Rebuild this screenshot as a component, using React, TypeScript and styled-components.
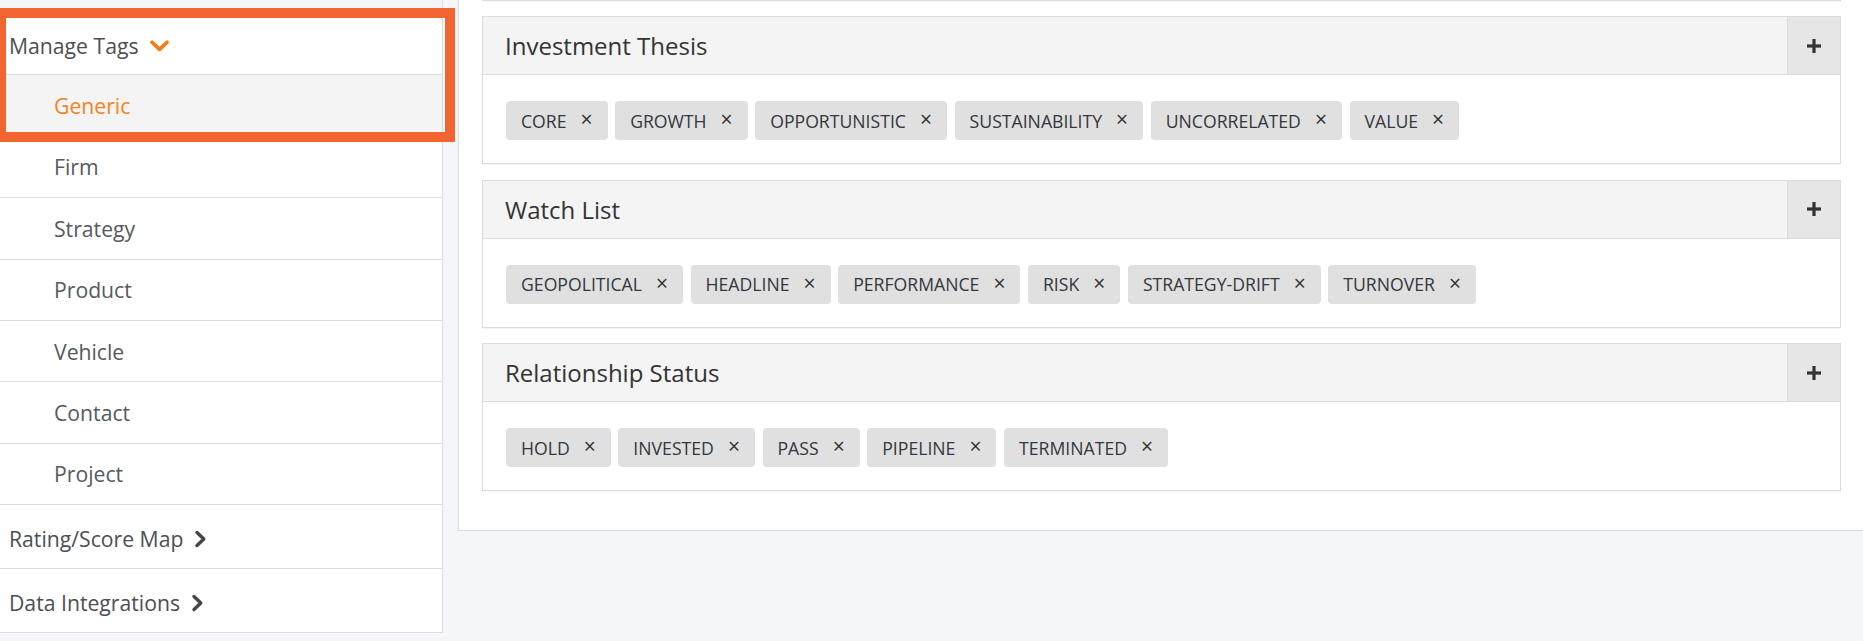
import React from 'react';
import styled, { createGlobalStyle } from 'styled-components';

const GlobalStyle = createGlobalStyle`
  html, body {
    margin: 0;
    padding: 0;
    background: #f5f6fa;
    font-family: 'Open Sans', 'Noto Sans', sans-serif;
  }
  * {
    box-sizing: border-box;
  }
`;

interface TagGroup {
  title: string;
  tags: string[];
}

const GROUPS: TagGroup[] = [
  {
    title: 'Investment Thesis',
    tags: ['CORE', 'GROWTH', 'OPPORTUNISTIC', 'SUSTAINABILITY', 'UNCORRELATED', 'VALUE'],
  },
  {
    title: 'Watch List',
    tags: ['GEOPOLITICAL', 'HEADLINE', 'PERFORMANCE', 'RISK', 'STRATEGY-DRIFT', 'TURNOVER'],
  },
  {
    title: 'Relationship Status',
    tags: ['HOLD', 'INVESTED', 'PASS', 'PIPELINE', 'TERMINATED'],
  },
];

const SUB_ITEMS = ['Generic', 'Firm', 'Strategy', 'Product', 'Vehicle', 'Contact', 'Project'];

const ChevronDown = () => (
  <svg width="19" height="12" viewBox="0 0 19 12">
    <path d="M2 2.2 L9.5 9.4 L17 2.2" fill="none" stroke="#f57c14" strokeWidth="3.6" strokeLinecap="round" strokeLinejoin="round" />
  </svg>
);

const ChevronRight = () => (
  <svg width="13" height="18" viewBox="0 0 13 18">
    <path d="M3 2.5 L9.8 9 L3 15.5" fill="none" stroke="#464646" strokeWidth="3.4" strokeLinecap="round" strokeLinejoin="round" />
  </svg>
);

const PlusIcon = () => (
  <svg width="14" height="14" viewBox="0 0 14 14">
    <rect x="5.4" y="0" width="3.2" height="14" fill="#333" />
    <rect x="0" y="5.4" width="14" height="3.2" fill="#333" />
  </svg>
);

export default function App() {
  return (
    <>
      <GlobalStyle />
      <Page>
        <Sidebar>
          <PrevStub />
          <TopItem>
            Manage Tags
            <IconWrap>
              <ChevronDown />
            </IconWrap>
          </TopItem>
          {SUB_ITEMS.map((item, i) => (
            <SubItem key={item} $active={i === 0}>
              {item}
            </SubItem>
          ))}
          <TopItem>
            Rating/Score Map
            <IconWrap>
              <ChevronRight />
            </IconWrap>
          </TopItem>
          <TopItem $last>
            Data Integrations
            <IconWrap>
              <ChevronRight />
            </IconWrap>
          </TopItem>
        </Sidebar>

        <Panel>
          <PrevCardEdge />
          {GROUPS.map((group) => (
            <Card key={group.title}>
              <CardHeader>
                <CardTitle>{group.title}</CardTitle>
                <AddButton type="button">
                  <PlusIcon />
                </AddButton>
              </CardHeader>
              <CardBody>
                {group.tags.map((tag) => (
                  <Tag key={tag}>
                    {tag}
                    <TagClose>×</TagClose>
                  </Tag>
                ))}
              </CardBody>
            </Card>
          ))}
        </Panel>

        <Highlight />
      </Page>
    </>
  );
}

const Page = styled.div`
  position: relative;
  display: flex;
  align-items: flex-start;
  gap: 15px;
  width: 1863px;
  height: 641px;
  overflow: hidden;
`;

const Sidebar = styled.nav`
  width: 443px;
  flex-shrink: 0;
  background: #fff;
  border-right: 1px solid #dcdcdc;
  border-bottom: 1px solid #dcdcdc;
`;

const PrevStub = styled.div`
  height: 11.8px;
  background: #f5f5f5;
  border-bottom: 1px solid #e0e0e0;
`;

const TopItem = styled.div<{ $last?: boolean }>`
  display: flex;
  align-items: center;
  height: 63.6px;
  padding: 4px 0 0 9px;
  font-size: 21.2px;
  color: #4b4f55;
  border-bottom: ${({ $last }) => ($last ? 'none' : '1px solid #dcdcdc')};
`;

const IconWrap = styled.span`
  display: inline-flex;
  margin-left: 11px;
  margin-top: 1px;
`;

const SubItem = styled.div<{ $active?: boolean }>`
  display: flex;
  align-items: center;
  height: 61.4px;
  padding-left: 54px;
  font-size: 21.2px;
  color: ${({ $active }) => ($active ? '#f58220' : '#555a60')};
  background: ${({ $active }) => ($active ? '#f4f4f4' : '#fff')};
  border-bottom: 1px solid #dcdcdc;
`;

const Panel = styled.main`
  flex: 1;
  display: flex;
  flex-direction: column;
  gap: 15.4px;
  background: #fff;
  border-left: 1px solid #dcdcdc;
  border-bottom: 1px solid #dcdcdc;
  padding: 0 22px 39px 23px;
`;

const PrevCardEdge = styled.div`
  height: 1px;
  background: #dcdcdc;
  box-shadow: 0 1px 1px rgba(0, 0, 0, 0.04);
`;

const Card = styled.section`
  background: #fff;
  border: 1px solid #dcdcdc;
  box-shadow: 0 1px 1px rgba(0, 0, 0, 0.04);
`;

const CardHeader = styled.header`
  display: flex;
  align-items: stretch;
  height: 58px;
  background: #f4f4f4;
  border-bottom: 1px solid #dcdcdc;
`;

const CardTitle = styled.h3`
  flex: 1;
  display: flex;
  align-items: center;
  margin: 0;
  padding-left: 22px;
  font-size: 24px;
  font-weight: 400;
  color: #333;
`;

const AddButton = styled.button`
  width: 53px;
  display: flex;
  align-items: center;
  justify-content: center;
  padding: 0;
  margin: 0;
  border: none;
  border-left: 1px solid #dcdcdc;
  background: #e6e6e6;
  cursor: pointer;
`;

const CardBody = styled.div`
  display: flex;
  flex-wrap: wrap;
  gap: 7.6px;
  padding: 26px 23px 23px;
`;

const Tag = styled.span`
  display: inline-flex;
  align-items: center;
  height: 39px;
  padding: 0 15px 0 15px;
  border-radius: 4px;
  background: #e0e0e0;
  font-size: 17.65px;
  color: #33373e;
`;

const TagClose = styled.span`
  margin-left: 14px;
  font-size: 21px;
  line-height: 1;
  color: #333;
  margin-top: -2px;
  cursor: pointer;
`;

const Highlight = styled.div`
  position: absolute;
  left: -4px;
  top: 8px;
  width: 459px;
  height: 134px;
  border: 10px solid #f26430;
  pointer-events: none;
`;
